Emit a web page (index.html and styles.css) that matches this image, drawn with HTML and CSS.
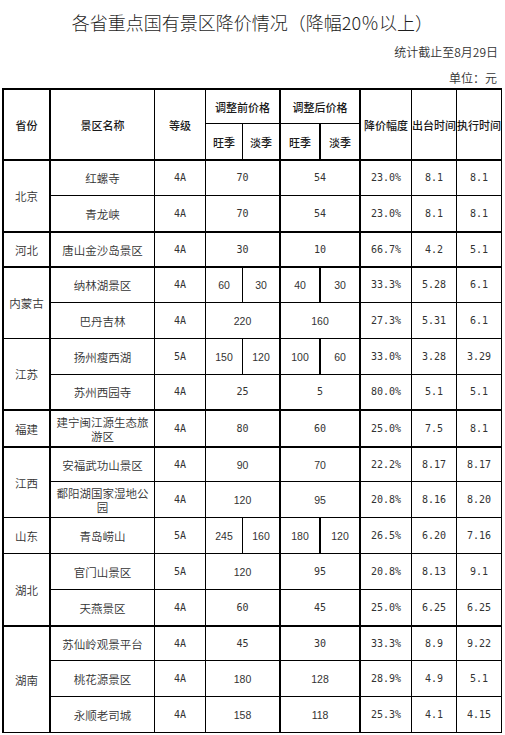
FILE: index.html
```html
<!DOCTYPE html>
<html lang="zh-CN">
<head>
<meta charset="utf-8">
<title>各省重点国有景区降价情况</title>
<link rel="stylesheet" href="styles.css">
</head>
<body>
<div class="page">
  <h1 class="title">各省重点国有景区降价情况（降幅20％以上）</h1>
  <p class="meta">统计截止至8月29日</p>
  <p class="meta unit">单位：元</p>

  <div class="grid">
    <div class="row">
      <div class="c hd pv r2 bt">省份</div>
      <div class="c hd r2 bt">景区名称</div>
      <div class="c hd r2 bt">等级</div>
      <div class="c hd w2 k">调整前价格</div>
      <div class="c hd w2 k">调整后价格</div>
      <div class="c hd r2 bt">降价幅度</div>
      <div class="c hd r2 bt">出台时间</div>
      <div class="c hd r2 bt">执行时间</div>
    </div>
    <div class="row thick">
      <div class="c hd">旺季</div>
      <div class="c hd k">淡季</div>
      <div class="c hd k">旺季</div>
      <div class="c hd k">淡季</div>
    </div>

    <!-- 北京 -->
    <div class="row">
      <div class="c pv r2 bt">北京</div>
      <div class="c nm">红螺寺</div>
      <div class="c n">4A</div>
      <div class="c n w2 k">70</div>
      <div class="c n w2 k">54</div>
      <div class="c n">23.0%</div>
      <div class="c n">8.1</div>
      <div class="c n">8.1</div>
    </div>
    <div class="row thick">
      <div class="c nm">青龙峡</div>
      <div class="c n">4A</div>
      <div class="c n w2 k">70</div>
      <div class="c n w2 k">54</div>
      <div class="c n">23.0%</div>
      <div class="c n">8.1</div>
      <div class="c n">8.1</div>
    </div>

    <!-- 河北 -->
    <div class="row thick">
      <div class="c pv">河北</div>
      <div class="c nm">唐山金沙岛景区</div>
      <div class="c n">4A</div>
      <div class="c n w2 k">30</div>
      <div class="c n w2 k">10</div>
      <div class="c n">66.7%</div>
      <div class="c n">4.2</div>
      <div class="c n">5.1</div>
    </div>

    <!-- 内蒙古 -->
    <div class="row">
      <div class="c pv r2">内蒙古</div>
      <div class="c nm">纳林湖景区</div>
      <div class="c n">4A</div>
      <div class="c n p">60</div>
      <div class="c n p k">30</div>
      <div class="c n p k">40</div>
      <div class="c n p k">30</div>
      <div class="c n">33.3%</div>
      <div class="c n">5.28</div>
      <div class="c n">6.1</div>
    </div>
    <div class="row">
      <div class="c nm">巴丹吉林</div>
      <div class="c n">4A</div>
      <div class="c n p w2 k">220</div>
      <div class="c n p w2 k">160</div>
      <div class="c n">27.3%</div>
      <div class="c n">5.31</div>
      <div class="c n">6.1</div>
    </div>

    <!-- 江苏 -->
    <div class="row">
      <div class="c pv r2 bt">江苏</div>
      <div class="c nm">扬州瘦西湖</div>
      <div class="c n">5A</div>
      <div class="c n p">150</div>
      <div class="c n p k">120</div>
      <div class="c n p k">100</div>
      <div class="c n p k">60</div>
      <div class="c n">33.0%</div>
      <div class="c n">3.28</div>
      <div class="c n">3.29</div>
    </div>
    <div class="row thick">
      <div class="c nm">苏州西园寺</div>
      <div class="c n">4A</div>
      <div class="c n w2 k">25</div>
      <div class="c n w2 k">5</div>
      <div class="c n">80.0%</div>
      <div class="c n">5.1</div>
      <div class="c n">5.1</div>
    </div>

    <!-- 福建 -->
    <div class="row thick">
      <div class="c pv">福建</div>
      <div class="c nm">建宁闽江源生态旅游区</div>
      <div class="c n">4A</div>
      <div class="c n w2 k">80</div>
      <div class="c n w2 k">60</div>
      <div class="c n">25.0%</div>
      <div class="c n">7.5</div>
      <div class="c n">8.1</div>
    </div>

    <!-- 江西 -->
    <div class="row">
      <div class="c pv r2">江西</div>
      <div class="c nm">安福武功山景区</div>
      <div class="c n">4A</div>
      <div class="c n p w2 k">90</div>
      <div class="c n p w2 k">70</div>
      <div class="c n">22.2%</div>
      <div class="c n">8.17</div>
      <div class="c n">8.17</div>
    </div>
    <div class="row">
      <div class="c nm">鄱阳湖国家湿地公园</div>
      <div class="c n">4A</div>
      <div class="c n p w2 k">120</div>
      <div class="c n p w2 k">95</div>
      <div class="c n">20.8%</div>
      <div class="c n">8.16</div>
      <div class="c n">8.20</div>
    </div>

    <!-- 山东 -->
    <div class="row">
      <div class="c pv">山东</div>
      <div class="c nm">青岛崂山</div>
      <div class="c n">5A</div>
      <div class="c n p">245</div>
      <div class="c n p k">160</div>
      <div class="c n p k">180</div>
      <div class="c n p k">120</div>
      <div class="c n">26.5%</div>
      <div class="c n">6.20</div>
      <div class="c n">7.16</div>
    </div>

    <!-- 湖北 -->
    <div class="row">
      <div class="c pv r2 bt">湖北</div>
      <div class="c nm">官门山景区</div>
      <div class="c n">5A</div>
      <div class="c n p w2 k">120</div>
      <div class="c n w2 k">95</div>
      <div class="c n">20.8%</div>
      <div class="c n">8.13</div>
      <div class="c n">9.1</div>
    </div>
    <div class="row thick">
      <div class="c nm">天燕景区</div>
      <div class="c n">4A</div>
      <div class="c n w2 k">60</div>
      <div class="c n w2 k">45</div>
      <div class="c n">25.0%</div>
      <div class="c n">6.25</div>
      <div class="c n">6.25</div>
    </div>

    <!-- 湖南 -->
    <div class="row">
      <div class="c pv r3">湖南</div>
      <div class="c nm">苏仙岭观景平台</div>
      <div class="c n">4A</div>
      <div class="c n w2 k">45</div>
      <div class="c n w2 k">30</div>
      <div class="c n">33.3%</div>
      <div class="c n">8.9</div>
      <div class="c n">9.22</div>
    </div>
    <div class="row">
      <div class="c nm">桃花源景区</div>
      <div class="c n">4A</div>
      <div class="c n p w2 k">180</div>
      <div class="c n p w2 k">128</div>
      <div class="c n">28.9%</div>
      <div class="c n">4.9</div>
      <div class="c n">5.1</div>
    </div>
    <div class="row">
      <div class="c nm">永顺老司城</div>
      <div class="c n">4A</div>
      <div class="c n p w2 k">158</div>
      <div class="c n p w2 k">118</div>
      <div class="c n">25.3%</div>
      <div class="c n">4.1</div>
      <div class="c n">4.15</div>
    </div>
  </div>
</div>
</body>
</html>
```

FILE: styles.css
```css
html, body {
  margin: 0;
  padding: 0;
  background: #ffffff;
}

body {
  font-family: "Noto Sans CJK SC", "Noto Sans", sans-serif;
  color: #2a2a2a;
}

.page {
  width: 505px;
}

.title {
  margin: 0;
  height: 44px;
  line-height: 44px;
  text-align: center;
  font-size: 18px;
  font-weight: 300;
  color: #1e1e1e;
  letter-spacing: 0;
}

.meta {
  margin: 0;
  height: 16px;
  line-height: 16px;
  text-align: right;
  font-size: 12px;
  font-weight: 350;
  color: #333;
  padding-right: 7px;
}

.meta.unit {
  margin-top: 10px;
  padding-right: 8px;
}

.grid {
  margin: 2px 0 0 2px;
  width: 498px;
  display: grid;
  grid-template-columns: 47px 104px 51px 37px 38px 40px 40px 51px 45px 45px;
  grid-template-rows: 34px 37px 35px 37px 35px 35px 36px 36px 36px 37px 34px 36px 36px 36px 37px 34px 36px 36px;
  border-top: 2px solid #000;
  border-left: 2px solid #000;
}

.row {
  display: contents;
}

.c {
  box-sizing: border-box;
  border-right: 1px solid #000;
  border-bottom: 1px solid #000;
  display: flex;
  align-items: center;
  justify-content: center;
  text-align: center;
  font-size: 11.5px;
  font-weight: 350;
  line-height: 14px;
  color: #333;
  padding: 0 5px;
  min-width: 0;
}

.row.thick > .c {
  border-bottom-width: 2px;
}

.c.bt {
  border-bottom-width: 2px;
}

.c.k,
.c.pv {
  border-right-width: 2px;
}

.r2 { grid-row: span 2; }
.r3 { grid-row: span 3; }
.w2 { grid-column: span 2; }

.hd {
  font-size: 11px;
  font-weight: 500;
  color: #1a1a1a;
  white-space: nowrap;
  padding: 0;
}

.pv {
  padding: 0;
  white-space: nowrap;
}

.n {
  font-family: "DejaVu Sans Mono", "Liberation Mono", monospace;
  font-size: 10px;
  font-weight: 400;
  color: #333;
  padding: 0;
}

.n.p {
  font-family: "Liberation Sans", Arial, sans-serif;
  font-size: 10.5px;
}
```
